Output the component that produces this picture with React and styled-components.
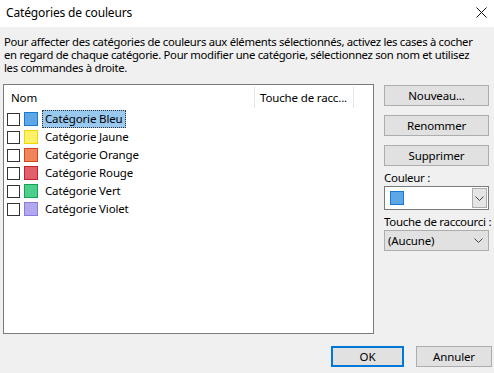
import styled, { createGlobalStyle } from "styled-components";

const GlobalStyle = createGlobalStyle`
  html, body { margin: 0; padding: 0; }
  body {
    width: 494px;
    height: 373px;
    overflow: hidden;
    background: #f0f0f0;
    font-family: "Noto Sans", "Open Sans", sans-serif;
    font-size: 11.5px;
    letter-spacing: -0.15px;
    color: #000;
    white-space: nowrap;
  }
`;

const categories = [
  { name: "Catégorie Bleu", fill: "#5ea7e6", border: "#1a78d0" },
  { name: "Catégorie Jaune", fill: "#fff06a", border: "#f2d600" },
  { name: "Catégorie Orange", fill: "#ee855b", border: "#d9461b" },
  { name: "Catégorie Rouge", fill: "#e05f6a", border: "#c1222e" },
  { name: "Catégorie Vert", fill: "#4fcd8c", border: "#14a552" },
  { name: "Catégorie Violet", fill: "#b2a8ee", border: "#8a7bd9" },
];

const Dialog = styled.div`
  width: 494px;
  height: 373px;
  display: flex;
  flex-direction: column;
`;

const TitleBar = styled.div`
  height: 27px;
  background: #fff;
  display: flex;
  align-items: center;
  justify-content: space-between;
  padding: 0 6px 2px;
  box-sizing: border-box;
  font-size: 12px;
  line-height: 1;
`;

const Close = styled.svg`
  width: 11px;
  height: 11px;
  margin-right: 1px;
`;

const Description = styled.div`
  padding: 8px 4px 0;
  height: 50px;
  box-sizing: border-box;
  font-size: 11.3px;
  letter-spacing: -0.3px;
`;

const Line = styled.div`
  height: 13px;
  line-height: 13px;
  white-space: nowrap;
`;

const Main = styled.div`
  display: flex;
  padding: 7px 5px 0 3px;
  gap: 10px;
`;

const ListBox = styled.div`
  width: 371px;
  height: 250px;
  box-sizing: border-box;
  border: 1px solid #7a7a7a;
  background: #fff;
`;

const Header = styled.div`
  display: flex;
  height: 25px;
  align-items: stretch;
`;

const HeaderCell = styled.div`
  width: ${(p) => p.width}px;
  box-sizing: border-box;
  padding-left: ${(p) => p.pad}px;
  display: flex;
  align-items: center;
  overflow: hidden;
  border-right: 1px solid #e5e5e5;
  margin-top: 2px;
  margin-bottom: 2px;
`;

const Row = styled.div`
  display: flex;
  align-items: center;
  height: 18px;
  padding-left: 3px;
`;

const Check = styled.span`
  width: 13px;
  height: 13px;
  box-sizing: border-box;
  border: 1px solid #333;
  background: #fff;
  margin-right: 4px;
`;

const Swatch = styled.span`
  display: block;
  width: 14px;
  height: 14px;
  box-sizing: border-box;
  border: 1px solid ${(p) => p.border};
  background: ${(p) => p.fill};
  margin-right: 4px;
`;

const Label = styled.span`
  padding: 0 2px 1px 2px;
  line-height: 15px;
  border: 1px ${(p) => (p.selected ? "dotted #333" : "solid transparent")};
  background: ${(p) => (p.selected ? "#99c9ef" : "transparent")};
`;

const Side = styled.div`
  width: 105px;
  display: flex;
  flex-direction: column;
  padding-top: 1px;
`;

const Button = styled.div`
  height: 21px;
  box-sizing: border-box;
  border: 1px solid ${(p) => (p.primary ? "#0078d7" : "#adadad")};
  box-shadow: ${(p) => (p.primary ? "inset 0 0 0 1px #0078d7" : "none")};
  background: #e1e1e1;
  display: flex;
  align-items: center;
  justify-content: center;
  padding-bottom: 1px;
  margin-bottom: ${(p) => p.mb ?? 0}px;
  width: ${(p) => p.width ?? "auto"};
`;

const FieldLabel = styled.div`
  height: 17px;
  line-height: 17px;
  letter-spacing: -0.3px;
`;

const Combo = styled.div`
  height: ${(p) => (p.editable ? 24 : 21)}px;
  box-sizing: border-box;
  border: 1px solid ${(p) => (p.editable ? "#7a7a7a" : "#adadad")};
  background: ${(p) => (p.editable ? "#fff" : "#e1e1e1")};
  display: flex;
  align-items: center;
  padding-left: ${(p) => (p.editable ? 5 : 3)}px;
  margin-bottom: ${(p) => p.mb ?? 0}px;
`;

const ComboText = styled.span`
  flex: 1;
  display: flex;
  align-items: center;
`;

const DropButton = styled.div`
  width: ${(p) => (p.boxed ? 15 : 20)}px;
  align-self: stretch;
  margin: ${(p) => (p.boxed ? "1px" : "0")};
  box-sizing: border-box;
  border: ${(p) => (p.boxed ? "1px solid #adadad" : "none")};
  background: ${(p) => (p.boxed ? "#e5e5e5" : "transparent")};
  display: flex;
  align-items: center;
  justify-content: center;
`;

const Footer = styled.div`
  display: flex;
  justify-content: flex-end;
  gap: 12px;
  padding: 12px 2px 0 0;
`;

const Chevron = () => (
  <svg width="9" height="5" viewBox="0 0 9 5">
    <path d="M0.5 0.5 L4.5 4.5 L8.5 0.5" fill="none" stroke="#444" strokeWidth="1" />
  </svg>
);

export default function App() {
  return (
    <>
      <GlobalStyle />
      <Dialog>
        <TitleBar>
          <span>Catégories de couleurs</span>
          <Close viewBox="0 0 11 11">
            <path d="M0.5 0.5 L10.5 10.5 M10.5 0.5 L0.5 10.5" stroke="#111" strokeWidth="1" />
          </Close>
        </TitleBar>
        <Description>
          <Line>Pour affecter des catégories de couleurs aux éléments sélectionnés, activez les cases à cocher</Line>
          <Line>en regard de chaque catégorie. Pour modifier une catégorie, sélectionnez son nom et utilisez</Line>
          <Line>les commandes à droite.</Line>
        </Description>
        <Main>
          <ListBox>
            <Header>
              <HeaderCell width={251} pad={7}>Nom</HeaderCell>
              <HeaderCell width={99} pad={5}>Touche de racc...</HeaderCell>
            </Header>
            {categories.map((c, i) => (
              <Row key={c.name}>
                <Check />
                <Swatch fill={c.fill} border={c.border} />
                <Label selected={i === 0}>{c.name}</Label>
              </Row>
            ))}
          </ListBox>
          <Side>
            <Button mb={9}>Nouveau...</Button>
            <Button mb={9}>Renommer</Button>
            <Button mb={3}>Supprimer</Button>
            <FieldLabel>Couleur :</FieldLabel>
            <Combo editable mb={3}>
              <ComboText>
                <Swatch fill="#5ea7e6" border="#1a78d0" />
              </ComboText>
              <DropButton boxed><Chevron /></DropButton>
            </Combo>
            <FieldLabel>Touche de raccourci :</FieldLabel>
            <Combo>
              <ComboText>(Aucune)</ComboText>
              <DropButton><Chevron /></DropButton>
            </Combo>
          </Side>
        </Main>
        <Footer>
          <Button primary width="73px">OK</Button>
          <Button width="76px">Annuler</Button>
        </Footer>
      </Dialog>
    </>
  );
}
